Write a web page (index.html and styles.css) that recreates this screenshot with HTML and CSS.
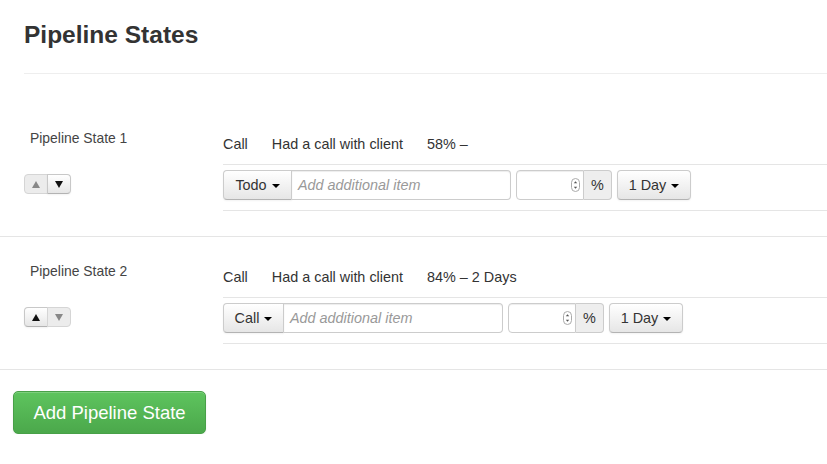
FILE: index.html
```html
<!DOCTYPE html>
<html>
<head>
<meta charset="utf-8">
<link rel="stylesheet" href="styles.css">
</head>
<body>
<header class="page-header">
  <h1>Pipeline States</h1>
</header>
<hr class="rule">
<div class="states">
  <section class="state">
    <div class="state-left">
      <div class="state-label">Pipeline State 1</div>
      <div class="order">
        <span class="order-btn is-disabled"><span class="tri-up"></span></span>
        <span class="order-btn"><span class="tri-down"></span></span>
      </div>
    </div>
    <div class="state-right">
      <div class="info"><span>Call</span><span>Had a call with client</span><span>58% –</span></div>
      <div class="form-row">
        <div class="input-group">
          <span class="btn btn-type w69">Todo <span class="caret"></span></span>
          <span class="text-input">Add additional item</span>
        </div>
        <div class="input-group">
          <span class="num-input"><span class="spin"><svg width="9" height="14" viewBox="0 0 9 14"><rect x="0.5" y="0.5" width="8" height="13" rx="4" fill="#fff" stroke="#aaa"/><path d="M2.8 5.2 L4.5 3.2 L6.2 5.2 Z" fill="#555"/><path d="M2.8 8.8 L4.5 10.8 L6.2 8.8 Z" fill="#555"/></svg></span></span>
          <span class="addon">%</span>
        </div>
        <span class="btn btn-day">1 Day <span class="caret"></span></span>
      </div>
    </div>
  </section>
  <section class="state">
    <div class="state-left">
      <div class="state-label">Pipeline State 2</div>
      <div class="order">
        <span class="order-btn"><span class="tri-up"></span></span>
        <span class="order-btn is-disabled"><span class="tri-down"></span></span>
      </div>
    </div>
    <div class="state-right">
      <div class="info"><span>Call</span><span>Had a call with client</span><span>84% – 2 Days</span></div>
      <div class="form-row">
        <div class="input-group">
          <span class="btn btn-type w61">Call <span class="caret"></span></span>
          <span class="text-input">Add additional item</span>
        </div>
        <div class="input-group">
          <span class="num-input"><span class="spin"><svg width="9" height="14" viewBox="0 0 9 14"><rect x="0.5" y="0.5" width="8" height="13" rx="4" fill="#fff" stroke="#aaa"/><path d="M2.8 5.2 L4.5 3.2 L6.2 5.2 Z" fill="#555"/><path d="M2.8 8.8 L4.5 10.8 L6.2 8.8 Z" fill="#555"/></svg></span></span>
          <span class="addon">%</span>
        </div>
        <span class="btn btn-day">1 Day <span class="caret"></span></span>
      </div>
    </div>
  </section>
</div>
<div class="actions">
  <span class="btn-success">Add Pipeline State</span>
</div>
</body>
</html>
```
FILE: styles.css
```css
html, body {
  margin: 0;
  padding: 0;
  background: #fff;
}
body {
  font-family: "Liberation Sans", Arial, sans-serif;
  font-size: 14px;
  line-height: 20px;
  color: #333;
  width: 827px;
  overflow: hidden;
}
.page-header {
  padding: 20px 0 0 24px;
}
.page-header h1 {
  margin: 0;
  font-size: 24.5px;
  line-height: 30px;
  font-weight: bold;
  color: #333;
}
.rule {
  margin: 23px 0 30px 24px;
  border: 0;
  border-top: 1px solid #eee;
  height: 0;
}
.state {
  display: flex;
  border-bottom: 1px solid #e5e5e5;
}
.state-left {
  width: 223px;
  padding: 24px 0 0 24px;
  box-sizing: border-box;
  flex: none;
}
.state-label {
  font-size: 13.9px;
  line-height: 20px;
  color: #444;
  padding-left: 6px;
}
.order {
  display: flex;
  margin-top: 26px;
  width: 48px;
}
.order-btn {
  width: 24px;
  height: 20px;
  box-sizing: border-box;
  border: 1px solid #c8c8c8;
  border-bottom-color: #b3b3b3;
  background: linear-gradient(#ffffff, #e6e6e6);
  display: flex;
  align-items: center;
  justify-content: center;
  box-shadow: inset 0 1px 0 rgba(255,255,255,.2), 0 1px 2px rgba(0,0,0,.05);
}
.order-btn:first-child {
  border-radius: 4px 0 0 4px;
}
.order-btn:last-child {
  border-radius: 0 4px 4px 0;
  margin-left: -1px;
}
.order-btn.is-disabled {
  background: #ececec;
  border-color: #d5d5d5;
  box-shadow: none;
}
.tri-up {
  width: 0;
  height: 0;
  border-left: 4px solid transparent;
  border-right: 4px solid transparent;
  border-bottom: 7px solid #111;
}
.tri-down {
  width: 0;
  height: 0;
  border-left: 4px solid transparent;
  border-right: 4px solid transparent;
  border-top: 7px solid #111;
}
.is-disabled .tri-up { border-bottom-color: #888; }
.is-disabled .tri-down { border-top-color: #888; }
.state-right {
  flex: 1;
  padding-top: 20px;
  padding-bottom: 25px;
}
.info {
  display: flex;
  gap: 24px;
  padding: 10px 0;
  line-height: 20px;
  border-bottom: 1px solid #e5e5e5;
  font-size: 14.4px;
  color: #333;
}
.form-row {
  display: flex;
  gap: 5px;
  padding: 5px 0 10px;
  border-bottom: 1px solid #e5e5e5;
}
.input-group {
  display: flex;
  height: 30px;
}
.btn {
  height: 30px;
  box-sizing: border-box;
  border: 1px solid #ccc;
  border-bottom-color: #b3b3b3;
  background: linear-gradient(#ffffff, #e6e6e6);
  border-radius: 4px;
  display: flex;
  align-items: center;
  justify-content: center;
  gap: 5px;
  font-size: 14.4px;
  color: #333;
  box-shadow: inset 0 1px 0 rgba(255,255,255,.2), 0 1px 2px rgba(0,0,0,.05);
}
.btn-type {
  border-radius: 4px 0 0 4px;
}
.w69 { width: 69px; }
.w61 { width: 61px; }
.btn-day {
  width: 74px;
}
.caret {
  width: 0;
  height: 0;
  border-left: 4px solid transparent;
  border-right: 4px solid transparent;
  border-top: 4px solid #000;
  margin-top: 1px;
}
.text-input {
  width: 219px;
  height: 30px;
  box-sizing: border-box;
  border: 1px solid #ccc;
  border-left: 0;
  border-radius: 0 4px 4px 0;
  padding: 0 6px;
  display: flex;
  align-items: center;
  font-style: italic;
  color: #999;
  font-size: 14.4px;
  box-shadow: inset 0 1px 1px rgba(0,0,0,.075);
}
.num-input {
  width: 68px;
  height: 30px;
  box-sizing: border-box;
  border: 1px solid #ccc;
  border-radius: 4px 0 0 4px;
  display: flex;
  align-items: center;
  justify-content: flex-end;
  padding-right: 3px;
  box-shadow: inset 0 1px 1px rgba(0,0,0,.075);
}
.spin {
  display: flex;
}
.addon {
  width: 28px;
  height: 30px;
  box-sizing: border-box;
  border: 1px solid #ccc;
  border-left: 0;
  border-radius: 0 4px 4px 0;
  background: #eee;
  display: flex;
  align-items: center;
  justify-content: center;
  font-size: 14.4px;
  color: #333;
}
.actions {
  padding: 21px 0 0 13px;
}
.btn-success {
  display: inline-flex;
  align-items: center;
  justify-content: center;
  width: 193px;
  height: 43px;
  box-sizing: border-box;
  border: 1px solid #48a048;
  border-radius: 5px;
  background: linear-gradient(#5ec45e, #4ba84b);
  color: #fff;
  font-size: 18.5px;
  box-shadow: inset 0 1px 0 rgba(255,255,255,.2), 0 1px 2px rgba(0,0,0,.08);
}
```
